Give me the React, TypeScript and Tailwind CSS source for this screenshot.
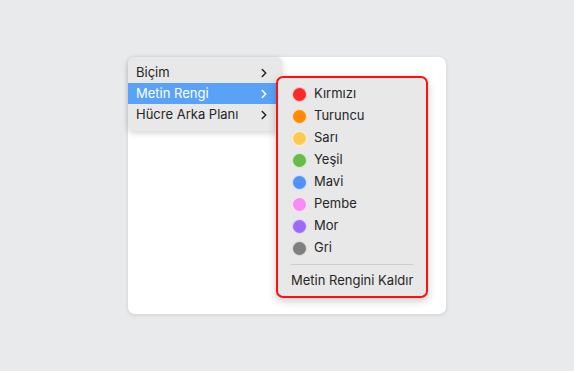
import { ChevronRight } from 'lucide-react'

const colors = [
  { name: 'Kırmızı', hex: '#fb2a2a' },
  { name: 'Turuncu', hex: '#fe8a05' },
  { name: 'Sarı', hex: '#fdc94f' },
  { name: 'Yeşil', hex: '#67bb46' },
  { name: 'Mavi', hex: '#5092f6' },
  { name: 'Pembe', hex: '#f98cf3' },
  { name: 'Mor', hex: '#9d6bf8' },
  { name: 'Gri', hex: '#7f7f7f' },
]

const items = ['Biçim', 'Metin Rengi', 'Hücre Arka Planı']

export default function App() {
  return (
    <div
      className="min-h-[371px] w-full bg-[#e9eaec] pl-[128px] pt-[57px] text-[13px] text-[#262626]"
      style={{ fontFamily: 'Inter, "Noto Sans", sans-serif' }}
    >
      <div className="relative h-[257px] w-[318px] rounded-[7px] bg-white shadow-[0_1px_4px_rgba(0,0,0,0.12)]">
        <div className="absolute left-0 top-0 w-[154px] rounded-[6px] bg-[#e8e8e8] pb-[6px] pt-[5px] shadow-[0_2px_6px_rgba(0,0,0,0.18)]">
          {items.map((label) => {
            const active = label === 'Metin Rengi'
            return (
              <div
                key={label}
                className={
                  active
                    ? 'flex h-[21px] items-center justify-between bg-[#5aa2f8] pl-[8px] pr-[11px] text-white'
                    : 'flex h-[21px] items-center justify-between pl-[8px] pr-[11px]'
                }
              >
                <span>{label}</span>
                <ChevronRight size={14} strokeWidth={2.6} />
              </div>
            )
          })}
        </div>

        <div className="absolute left-[148px] top-[19px] w-[152px] rounded-[7px] border-2 border-[#ff0f0f] bg-[#e8e8e8] pb-[4px] pt-[5px] shadow-[0_3px_8px_rgba(0,0,0,0.2)]">
          {colors.map((c) => (
            <div key={c.name} className="flex h-[22px] items-center gap-[7px] pl-[14px]">
              <span
                className="h-[15px] w-[15px] shrink-0 rounded-full border border-white/70"
                style={{ backgroundColor: c.hex }}
              />
              <span>{c.name}</span>
            </div>
          ))}
          <div className="mx-[13px] my-[5px] h-px bg-[#cdcdcd]" />
          <div className="flex h-[22px] items-center pl-[13px]">Metin Rengini Kaldır</div>
        </div>
      </div>
    </div>
  )
}
